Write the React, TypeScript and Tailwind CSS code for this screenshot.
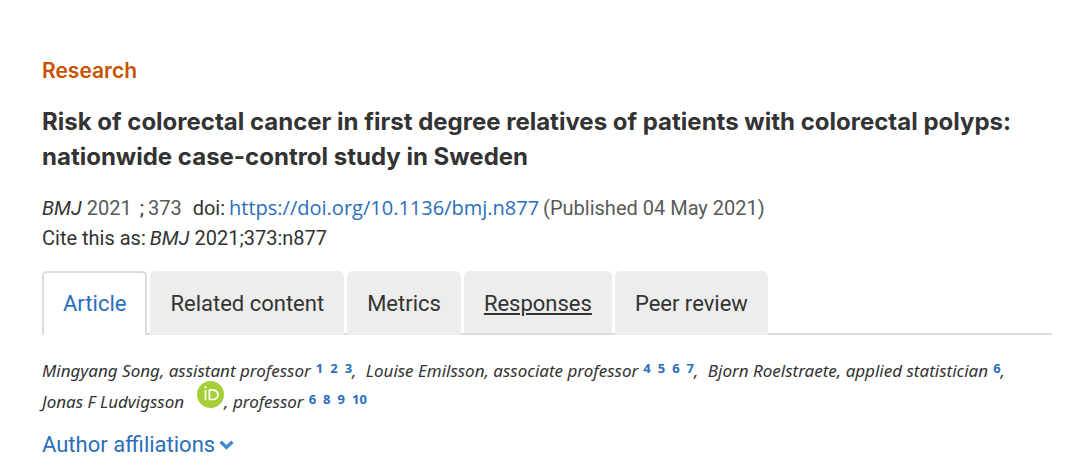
import { Fragment } from 'react';

const tabs = [
  { label: 'Article', active: true },
  { label: 'Related content' },
  { label: 'Metrics' },
  { label: 'Responses', hovered: true },
  { label: 'Peer review' },
];

const authors = [
  { name: 'Mingyang Song', role: 'assistant professor', refs: [1, 2, 3] },
  { name: 'Louise Emilsson', role: 'associate professor', refs: [4, 5, 6, 7] },
  { name: 'Bjorn Roelstraete', role: 'applied statistician', refs: [6] },
  { name: 'Jonas F Ludvigsson', role: 'professor', refs: [6, 8, 9, 10], orcid: true },
];

function OrcidIcon() {
  return (
    <svg viewBox="0 0 27 27" className="h-[27px] w-[27px] shrink-0" aria-hidden="true">
      <circle cx="13.5" cy="13.5" r="13.5" fill="#a6ce39" />
      <circle cx="8.5" cy="6.2" r="1.1" fill="#fff" />
      <path d="M8.5 9v10.2" stroke="#fff" strokeWidth="1.7" fill="none" />
      <path
        d="M12.4 9.1h3.4c3.4 0 5.2 2.2 5.2 4.7 0 2.7-2.1 4.7-5.2 4.7h-3.4z"
        stroke="#fff"
        strokeWidth="1.7"
        fill="none"
      />
    </svg>
  );
}

function ChevronIcon() {
  return (
    <svg viewBox="0 0 15 12" className="h-3 w-[15px]" aria-hidden="true">
      <path d="M1.6 2.8l5.9 5.6 5.9-5.6" stroke="#428bca" strokeWidth="3.4" fill="none" />
    </svg>
  );
}

function AuthorRefs({ refs }: { refs: number[] }) {
  return (
    <span className="ml-[5px] inline-flex gap-[7px] align-[4px] text-[13px] leading-[12px] font-bold text-[#2a6ebb] not-italic">
      {refs.map((n) => (
        <a key={n} href={`#aff-${n}`}>{n}</a>
      ))}
    </span>
  );
}

export default function App() {
  return (
    <main className="bg-white pt-14 pr-7 pl-[42px] font-['Roboto',sans-serif] text-[#333]">
      <p className="font-['Inter',sans-serif] text-[21px] leading-[30px] font-semibold text-[#c75300]">
        Research
      </p>
      <h1 className="mt-[18px] font-['Inter',sans-serif] text-[24px] leading-[35px] font-bold">
        Risk of colorectal cancer in first degree relatives of patients with colorectal polyps:{' '}
        <br />
        nationwide case-control study in Sweden
      </h1>

      {/* Citation */}
      <div className="mt-[19px] text-[20px] leading-[30px]">
        <div className="flex flex-wrap">
          <i>BMJ</i>
          <span className="ml-[5px] text-[#595959]">2021</span>
          <span className="ml-2">;</span>
          <span className="ml-1 text-[#595959]">373</span>
          <span className="ml-[11px]">doi:</span>
          <a href="https://doi.org/10.1136/bmj.n877" className="ml-1 font-['Open_Sans',sans-serif] text-[#2a6ebb]">
            https://doi.org/10.1136/bmj.n877
          </a>
          <span className="ml-1 text-[#595959]">(Published 04 May 2021)</span>
        </div>
        <div className="flex flex-wrap">
          <span>Cite this as:</span>
          <i className="ml-1">BMJ</i>
          <span className="ml-[5px]">2021;373:n877</span>
        </div>
      </div>

      {/* Tabs */}
      <nav className="mt-[18px] flex gap-[3px] border-b-2 border-[#dcdcdc]">
        {tabs.map((tab) => (
          <a
            key={tab.label}
            href="#"
            className={
              tab.active
                ? '-mb-[2px] rounded-t-[5px] border-2 border-b-0 border-[#dcdcdc] bg-white px-[19px] py-4 text-[22px] leading-[30px] text-[#2a6ebb]'
                : tab.hovered
                  ? 'rounded-t-[5px] bg-[#ededed] px-5 pt-[18px] pb-[14px] text-[22px] leading-[30px] underline decoration-2 underline-offset-2'
                  : '-mb-[2px] rounded-t-[5px] bg-[#ededed] px-5 pt-[18px] pb-4 text-[22px] leading-[30px]'
            }
          >
            {tab.label}
          </a>
        ))}
      </nav>

      {/* Authors */}
      <div className="mt-5 pr-8 font-['Noto_Sans',sans-serif] text-[17px] leading-[31px] italic">
        {authors.map((author, i) => (
          <Fragment key={author.name}>
            {author.name}
            {author.orcid && (
              <a href="https://orcid.org" aria-label="ORCID" className="ml-[13px] inline-flex h-5 items-end">
                <OrcidIcon />
              </a>
            )}
            , {author.role}
            <AuthorRefs refs={author.refs} />
            {i < authors.length - 1 && <span className="mr-[5px]">, </span>}
          </Fragment>
        ))}
      </div>

      <button className="mt-[13px] flex items-center gap-1 text-[22px] leading-[30px] text-[#2a6ebb]">
        Author affiliations
        <ChevronIcon />
      </button>
    </main>
  );
}
